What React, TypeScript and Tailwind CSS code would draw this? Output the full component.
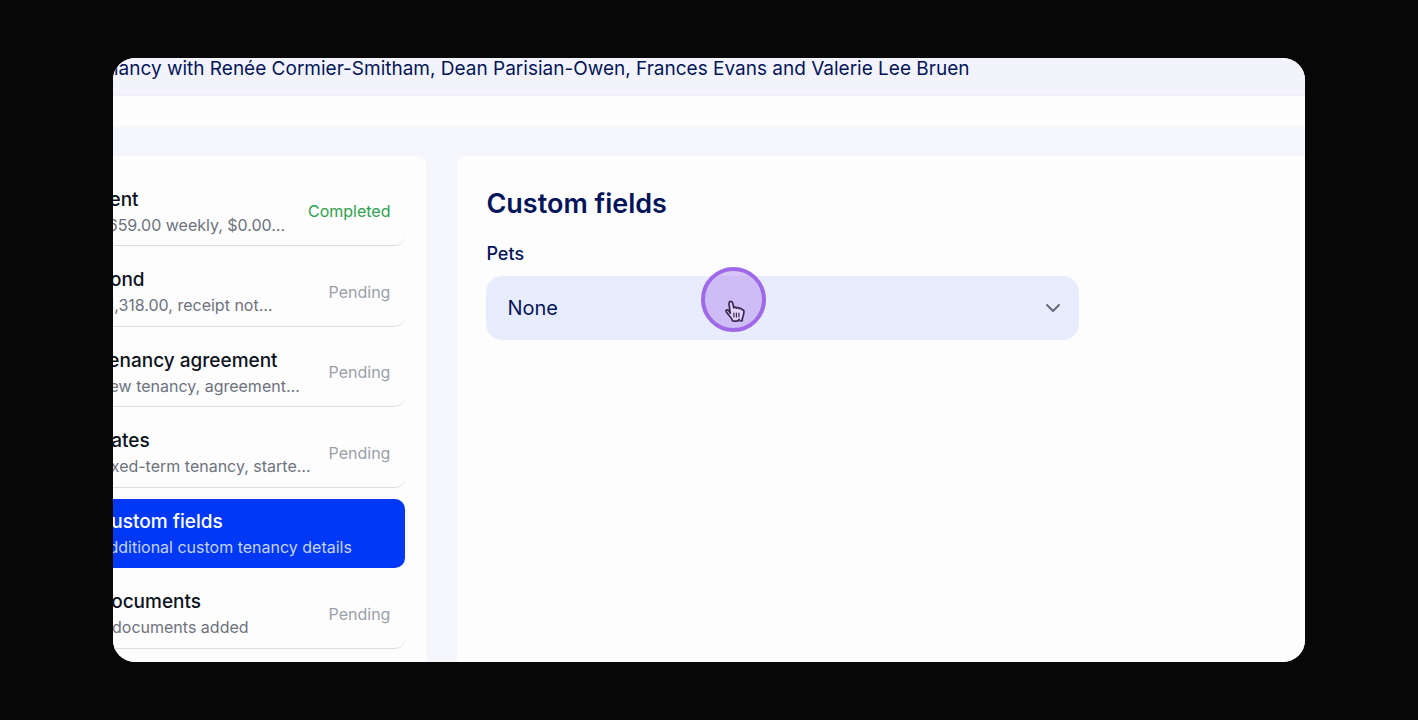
import { ChevronDown } from "lucide-react";

type Status = "Completed" | "Pending";

interface Step {
  title: string;
  detail: string;
  status?: Status;
  active?: boolean;
}

const steps: Step[] = [
  { title: "Rent", detail: "$659.00 weekly, $0.00…", status: "Completed" },
  { title: "Bond", detail: "$1,318.00, receipt not…", status: "Pending" },
  { title: "Tenancy agreement", detail: "New tenancy, agreement…", status: "Pending" },
  { title: "Dates", detail: "Fixed-term tenancy, starte…", status: "Pending" },
  { title: "Custom fields", detail: "Additional custom tenancy details", active: true },
  { title: "Documents", detail: "0 documents added", status: "Pending" },
];

function StepItem({ step }: { step: Step }) {
  const box = step.active ? "bg-[#0038f5]" : "border-b border-[#dcdde1]";
  const title = step.active ? "text-white" : "text-[#0d1220]";
  const detail = step.active ? "text-[#c5d3fd]" : "text-[#6d727e]";
  const status = step.status === "Completed" ? "text-[#2da14e]" : "text-[#9b9fa9]";
  return (
    <li>
      <button
        type="button"
        className={`flex h-[69px] w-full items-center justify-between rounded-[10px] pr-[15px] pl-4 text-left ${box}`}
      >
        <span className="flex flex-col whitespace-nowrap">
          <span className={`text-[19px] leading-[27px] font-medium ${title}`}>{step.title}</span>
          <span className={`text-base leading-6 ${detail}`}>{step.detail}</span>
        </span>
        {step.status && <span className={`text-base leading-6 ${status}`}>{step.status}</span>}
      </button>
    </li>
  );
}

function ClickMarker() {
  return (
    <div className="pointer-events-none absolute -top-[9px] left-[215px] size-[65px] rounded-full border-4 border-[#9f69e8] bg-[#b48cf0]/50">
      <svg viewBox="0 0 20 23" className="absolute top-[29px] left-5 h-[23px] w-5" aria-hidden="true">
        <path
          d="M5.2 13.2 4.1 4.6C3.8 2.5 4.6 1.3 5.7 1.3c1.1 0 1.8.8 2.1 2.2l1 4.4c.2-1 2.3-1.1 2.7.3.5-.9 2.5-.8 2.9.6.7-.8 2.5-.4 2.8 1.1.7-.4 1.7.1 1.7 1.3 0 2.5-.3 4-1 5.6-.6 1.3-.8 2.2-.8 3.9-1 .4-1.9.4-2.5-.2l-.6-1-1.2 1.4c-1.3.4-3.7.3-5.1 0-.6-2-1.5-3.1-2.9-4.7-1.3-1.5-2.9-3.5-3.6-4.5-.6-1-.1-1.9.9-1.9 1.1 0 2 .8 3.1 3.4Z"
          fill="#e2d3f8"
          stroke="#3a2850"
          strokeWidth="1.7"
          strokeLinejoin="round"
        />
        <path d="M8.9 13v4M11.4 13v4M13.9 13v4" stroke="#3a2850" strokeWidth="1.2" strokeLinecap="round" />
      </svg>
    </div>
  );
}

export default function App() {
  return (
    <div className="flex min-h-screen flex-col bg-[#070707] px-[8%] py-[58px] font-['Inter',sans-serif]">
      <div className="flex flex-1 flex-col overflow-hidden rounded-[22px] bg-[#f5f6fb]">
        <header className="border-b-2 border-[#f0eefa] bg-[#f3f4fb] pb-3.5">
          <h1 className="-ml-7 text-[19px] leading-[22px] whitespace-nowrap text-[#04145a]">
            Tenancy with Renée Cormier-Smitham, Dean Parisian-Owen, Frances Evans and Valerie Lee Bruen
          </h1>
        </header>
        <div className="h-[30px] bg-[#fdfdfd] shadow-[0_1px_2px_#f8f8f8]" />

        <div className="flex flex-1 gap-[31px] pt-[30px]">
          <nav className="-ml-8 flex w-[345px] shrink-0 flex-col rounded-t-lg bg-[#fdfdfd] pt-[21px] pr-[21px] pb-[13px]">
            <ol className="flex flex-1 flex-col justify-between gap-2">
              {steps.map((step) => (
                <StepItem key={step.title} step={step} />
              ))}
            </ol>
          </nav>

          <main className="flex-1 rounded-tl-lg bg-[#fdfdfd] px-[29px] pt-8">
            <h2 className="text-[27px] leading-8 font-semibold text-[#04145a]">Custom fields</h2>
            <label htmlFor="pets" className="mt-5 block text-lg leading-7 font-medium text-[#04145a]">
              Pets
            </label>
            <div className="relative mt-2 max-w-[593px]">
              <select
                id="pets"
                defaultValue="None"
                className="block h-16 w-full appearance-none rounded-2xl bg-[#e8edfd] px-[21px] text-xl text-[#04145a]"
              >
                <option>None</option>
              </select>
              <ChevronDown
                className="pointer-events-none absolute top-5 right-3.5 size-6 text-[#646b7c]"
                strokeWidth={2}
                aria-hidden="true"
              />
              <ClickMarker />
            </div>
          </main>
        </div>
      </div>
    </div>
  );
}
